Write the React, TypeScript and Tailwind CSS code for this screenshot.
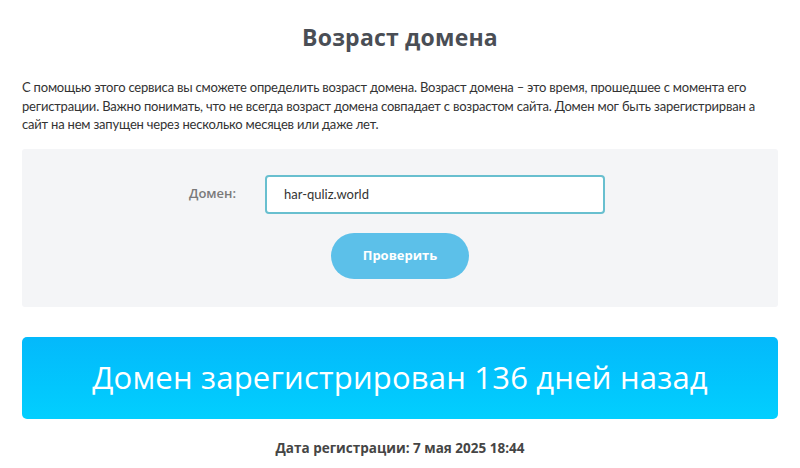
import React, { useState } from "react";

export default function App(): JSX.Element {
  const [domain, setDomain] = useState("har-quliz.world");

  return (
    <div className="w-[800px] h-[468px] bg-white px-[22px] overflow-hidden">
      <h1 className="pt-[23px] text-center text-[23px] leading-[28px] font-bold tracking-[0.2px] text-[#4a4e55] font-['Open_Sans',sans-serif]">
        Возраст домена
      </h1>

      <p className="mt-[27px] text-[13px] leading-[18.5px] tracking-[-0.2px] text-[#333] font-['Lato',sans-serif]">
        С помощью этого сервиса вы сможете определить возраст домена. Возраст домена – это время, прошедшее с момента его
        <br />
        регистрации. Важно понимать, что не всегда возраст домена совпадает с возрастом сайта. Домен мог быть
        зарегистрирван а
        <br />
        сайт на нем запущен через несколько месяцев или даже лет.
      </p>

      <form
        onSubmit={(e) => e.preventDefault()}
        className="mt-[15px] h-[158px] bg-[#f4f5f7] rounded-[3px] flex flex-col items-center pt-[26px]"
      >
        <div className="flex items-center ml-[-6px]">
          <label
            htmlFor="domain"
            className="w-[76px] text-[13px] font-semibold text-[#7a7a7a] font-['Open_Sans',sans-serif]"
          >
            Домен:
          </label>
          <input
            id="domain"
            type="text"
            value={domain}
            onChange={(e) => setDomain(e.target.value)}
            className="w-[340px] h-[39px] px-[17px] bg-white border-2 border-[#68bfcf] rounded-[4px] text-[13px] text-[#333] outline-none font-['Lato',sans-serif]"
          />
        </div>
        <button
          type="submit"
          className="mt-[19px] w-[138px] h-[46px] rounded-full bg-[#5cc0e9] text-white text-[13px] font-bold font-['Open_Sans',sans-serif]"
        >
          Проверить
        </button>
      </form>

      <div className="mt-[30px] h-[82px] rounded-[5px] bg-gradient-to-b from-[#04b9fb] to-[#02cffe] flex items-center justify-center">
        <span className="text-white text-[31px] font-normal tracking-[0.2px] font-['Open_Sans',sans-serif]">
          Домен зарегистрирован 136 дней назад
        </span>
      </div>

      <p className="mt-[19px] text-center text-[13.5px] font-bold text-[#454545] font-['Open_Sans',sans-serif]">
        Дата регистрации: 7 мая 2025 18:44
      </p>
    </div>
  );
}
